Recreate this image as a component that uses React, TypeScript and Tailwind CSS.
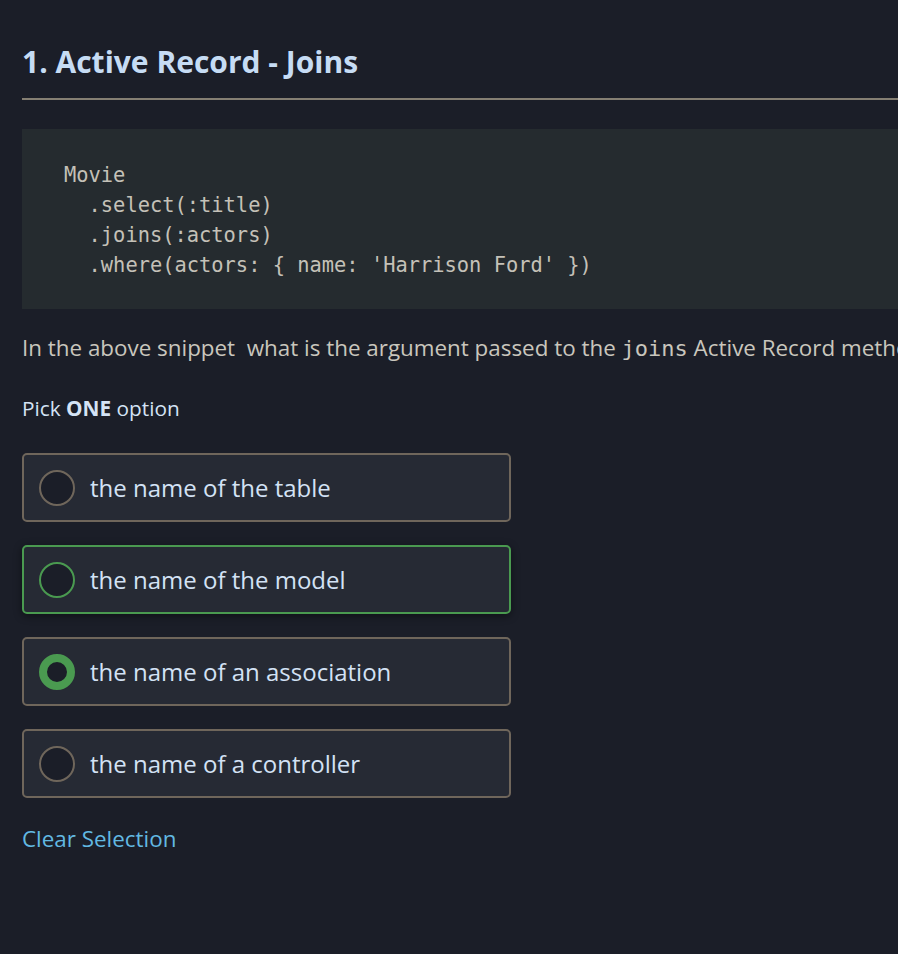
const OPTIONS = [
  { label: 'the name of the table', state: 'idle' },
  { label: 'the name of the model', state: 'hover' },
  { label: 'the name of an association', state: 'checked' },
  { label: 'the name of a controller', state: 'idle' },
] as const;

const sans = "font-['Open_Sans','Noto_Sans',sans-serif]";
const mono = "font-['DejaVu_Sans_Mono','Liberation_Mono',monospace]";

export default function App() {
  return (
    <div className={`min-h-[954px] w-[898px] overflow-hidden bg-[#1b1e28] ${sans}`}>
      <div className="w-[1100px] pl-[22px] pt-[40px]">
        <h1 className="text-[30px] font-bold leading-[44px] text-[#c6dcf4]">1. Active Record - Joins</h1>
        <div className="mt-[14px] h-[2px] bg-[#857f73]" />

        <pre
          className={`mt-[29px] h-[180px] bg-[#252b2f] pl-[42px] pt-[31px] text-[20.4px] leading-[30px] text-[#c4c1b8] ${mono}`}
        >
{`Movie
  .select(:title)
  .joins(:actors)
  .where(actors: { name: 'Harrison Ford' })`}
        </pre>

        <p className="mt-[23px] whitespace-nowrap text-[22.4px] leading-[32px] text-[#c9c6bd]">
          In the above snippet&nbsp; what is the argument passed to the{' '}
          <code className={`text-[22px] ${mono}`}>joins</code> Active Record method?
        </p>

        <p className="mt-[28px] text-[20.8px] leading-[30px] text-[#d4e3f5]">
          Pick <span className="font-bold">ONE</span> option
        </p>

        <div className="mt-[30px] flex w-[489px] flex-col gap-[23px]">
          {OPTIONS.map((opt) => (
            <div
              key={opt.label}
              className={`flex h-[69px] items-center gap-[15px] rounded-[5px] border-2 bg-[#262a34] pl-[15px] ${
                opt.state === 'hover'
                  ? 'border-[#4a9a50] shadow-[0_2px_8px_rgba(0,0,0,0.45)]'
                  : 'border-[#6f665b]'
              }`}
            >
              {opt.state === 'checked' ? (
                <span className="h-[36px] w-[36px] shrink-0 rounded-full border-[8px] border-[#4a9a50] bg-[#1b1e28]" />
              ) : (
                <span
                  className={`h-[36px] w-[36px] shrink-0 rounded-full border-2 bg-[#1b1e28] ${
                    opt.state === 'hover' ? 'border-[#4a9a50]' : 'border-[#6f665b]'
                  }`}
                />
              )}
              <span className="text-[24px] leading-[30px] text-[#d3e2f5]">{opt.label}</span>
            </div>
          ))}
        </div>

        <button type="button" className="mt-[26px] text-[22.4px] leading-[30px] text-[#62b9e2]">
          Clear Selection
        </button>
      </div>
    </div>
  );
}
